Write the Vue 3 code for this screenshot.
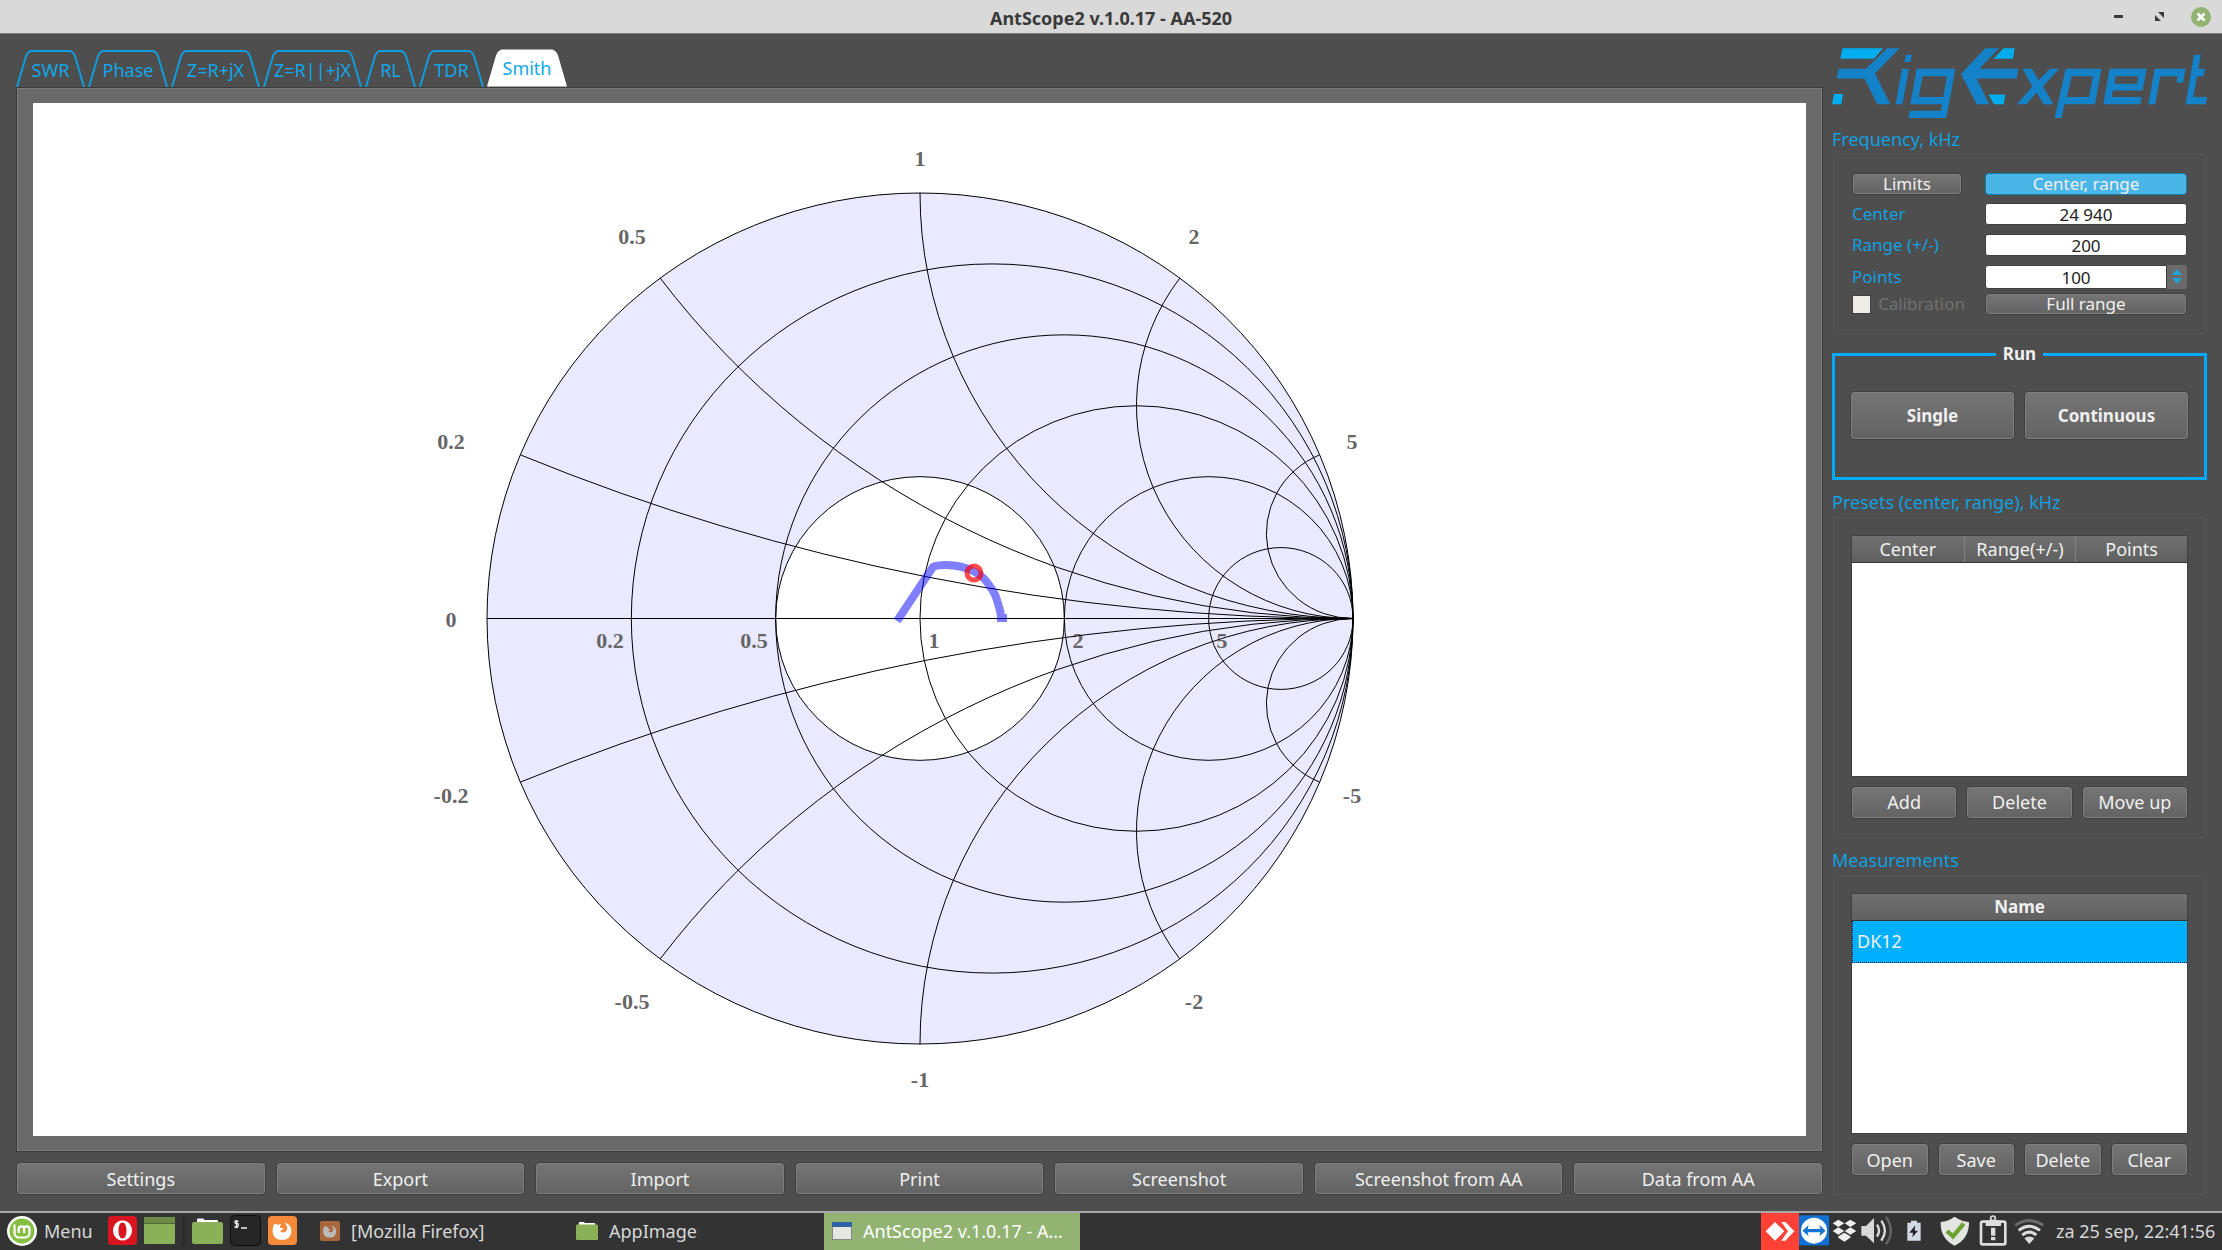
<script setup>
import { ref } from 'vue'

const tabs = [
  { name: 'SWR', w: 69 },
  { name: 'Phase', w: 80 },
  { name: 'Z=R+jX', w: 89 },
  { name: 'Z=R||+jX', w: 99 },
  { name: 'RL', w: 51 },
  { name: 'TDR', w: 65 },
  { name: 'Smith', w: 80 },
]
const active = ref('Smith')
const tabPath = (w) =>
  `M1 38 L10 7 Q12 2 16 2 H${w - 16} Q${w - 12} 2 ${w - 10} 7 L${w - 1} 38`

const actions = ['Settings', 'Export', 'Import', 'Print', 'Screenshot', 'Screenshot from AA', 'Data from AA']

/* Smith chart geometry */
const cx = 920
const cy = 618.5
const rx = 433
const ry = 425.5
const resistance = [0.2, 0.5, 1, 2, 5].map((r) => ({
  r,
  cx: cx + (rx * r) / (1 + r),
  rx: rx / (1 + r),
  ry: ry / (1 + r),
}))
const reactance = [0.2, 0.5, 1, 2, 5].flatMap((x) =>
  [1, -1].map((s) => {
    const d = x * x + 1
    const ex = cx + (rx * (x * x - 1)) / d
    const ey = cy - (s * ry * 2 * x) / d
    return `M${ex} ${ey} A${rx / x} ${ry / x} 0 0 ${s > 0 ? 0 : 1} ${cx + rx} ${cy}`
  })
)
const labels = [
  ['1', 920, 166], ['0.5', 632, 244], ['2', 1194, 244], ['0.2', 451, 449], ['5', 1352, 449],
  ['0', 451, 627], ['-0.2', 451, 803], ['-5', 1352, 803], ['-0.5', 632, 1009], ['-2', 1194, 1009],
  ['-1', 920, 1087],
  ['0.2', 610, 648], ['0.5', 754, 648], ['1', 934, 648], ['2', 1078, 648], ['5', 1222, 648],
]

const center = ref('24 940')
const range = ref('200')
const points = ref('100')
</script>

<template>
  <div class="screen">
    <header class="titlebar">
      <h1>AntScope2 v.1.0.17 - AA-520</h1>
      <div class="winctl">
        <button aria-label="Minimize"><svg width="22" height="22" viewBox="0 0 22 22"><rect x="6" y="9" width="9" height="3" fill="#3a3a3a" /></svg></button>
        <button aria-label="Restore"><svg width="22" height="22" viewBox="0 0 22 22"><path d="M9 6h6v6z M6 9v6h6z" fill="#3a3a3a" /></svg></button>
        <button aria-label="Close"><svg width="22" height="22" viewBox="0 0 22 22"><circle cx="11" cy="11" r="10" fill="#92b372" /><path d="M7.500 7.500l7 7M14.500 7.500l-7 7" stroke="#fff" stroke-width="2.600" /></svg></button>
      </div>
    </header>

    <main class="window">
      <section class="left">
        <nav class="tabs" role="tablist">
          <button
            v-for="t in tabs"
            :key="t.name"
            role="tab"
            class="tab"
            :class="{ on: t.name === active }"
            :aria-selected="t.name === active"
            :style="{ width: t.w + 'px' }"
            @click="active = t.name"
          >
            <svg class="tabshape" :viewBox="`0 0 ${t.w} 38`" aria-hidden="true"><path :d="tabPath(t.w)" /></svg>
            <span>{{ t.name }}</span>
          </button>
        </nav>
        <div class="pane">
          <svg class="chart" viewBox="33 103 1773 1033" role="img" aria-label="Smith chart">
            <ellipse :cx="cx" :cy="cy" :rx="rx" :ry="ry" class="disc" />
            <ellipse :cx="cx" :cy="cy" :rx="rx / 3" :ry="ry / 3" class="swr" />
            <text v-for="(l, i) in labels" :key="i" :x="l[1]" :y="l[2]">{{ l[0] }}</text>
            <g class="grid">
              <ellipse v-for="c in resistance" :key="c.r" :cx="c.cx" :cy="cy" :rx="c.rx" :ry="c.ry" />
              <path v-for="d in reactance" :key="d" :d="d" />
              <path :d="`M${cx - rx} ${cy}H${cx + rx}`" />
            </g>
            <path class="trace" d="M897 621L933 567Q936 565 946 565Q962 565 975 572Q984 577 989 585Q996 594 998 604Q1001 612 1001 618L1007 618" />
            <circle class="marker" cx="974" cy="573" r="7" />
          </svg>
        </div>
        <div class="actions">
          <button v-for="a in actions" :key="a" class="btn">{{ a }}</button>
        </div>
      </section>

      <aside class="side">
        <svg class="logo" viewBox="96 145 1125 209" role="img" aria-label="RigExpert" preserveAspectRatio="none">
          <g fill="#00aeef">
            <path d="M127 146H249L222 177H121z M102 282H129L124 313H96z M611 146H644L639 177H580z M565 284H616L611 313H582z" />
          </g>
          <g fill="#1482c8">
            <path d="M262 146H299L225 221L271 313H232L193 236H110L116 207H198z" />
            <path d="M318 165H336L331 187H313z M306 207H327L307 313H287z" />
            <path fill-rule="evenodd" d="M350 207H466L439 354H325L330 332H422L426 313H331z M368 229L356 291H430L441 229z" />
            <path d="M556 146H597L538 207H655L650 236H530L568 313H530L483 223z" />
            <path d="M668 207H696L716 241L750 207H778L729 259L760 313H731L710 278L679 313H651L697 260z" />
            <path fill-rule="evenodd" d="M797 207H904L885 313H793L785 354H764z M815 229L801 291H867L879 229z" />
            <path fill-rule="evenodd" d="M929 207H1040L1028 272H939L935 291H1025L1021 313H910z M947 229L943 252H1011L1015 229z" />
            <path d="M1064 207H1157L1149 248H1129L1133 229H1081L1066 313H1045z" />
            <path d="M1182 165H1202L1195 207H1215L1211 229H1191L1180 291H1221L1218 313H1157z" />
          </g>
        </svg>

        <section class="group">
          <h2>Frequency, kHz</h2>
          <div class="frame freq">
            <button class="btn slim">Limits</button>
            <button class="btn slim chosen">Center, range</button>
            <label for="center">Center</label>
            <input id="center" v-model="center" type="text" />
            <label for="range">Range (+/-)</label>
            <input id="range" v-model="range" type="text" />
            <label for="points">Points</label>
            <div class="spin">
              <input id="points" v-model="points" type="text" />
              <div class="steps">
                <button aria-label="Increase"><svg width="12" height="7" viewBox="0 0 12 7"><path d="M1 7L6 1L11 7z" fill="#1fa5d5" /></svg></button>
                <button aria-label="Decrease"><svg width="12" height="7" viewBox="0 0 12 7"><path d="M1 0L6 6L11 0z" fill="#1fa5d5" /></svg></button>
              </div>
            </div>
            <label class="calib"><input type="checkbox" disabled />Calibration</label>
            <button class="btn slim">Full range</button>
          </div>
        </section>

        <fieldset class="run">
          <legend>Run</legend>
          <div class="row">
            <button class="btn big">Single</button>
            <button class="btn big">Continuous</button>
          </div>
        </fieldset>

        <section class="group grow">
          <h2>Presets (center, range), kHz</h2>
          <div class="frame list">
            <div class="tablebox">
              <table>
                <thead><tr><th>Center</th><th>Range(+/-)</th><th>Points</th></tr></thead>
              </table>
            </div>
            <div class="row">
              <button class="btn">Add</button>
              <button class="btn">Delete</button>
              <button class="btn">Move up</button>
            </div>
          </div>
        </section>

        <section class="group grow">
          <h2>Measurements</h2>
          <div class="frame list">
            <div class="tablebox">
              <table class="names">
                <thead><tr><th>Name</th></tr></thead>
                <tbody><tr><td>DK12</td></tr></tbody>
              </table>
            </div>
            <div class="row">
              <button class="btn">Open</button>
              <button class="btn">Save</button>
              <button class="btn">Delete</button>
              <button class="btn">Clear</button>
            </div>
          </div>
        </section>
      </aside>
    </main>

    <footer class="taskbar">
      <button class="menu">
        <svg width="30" height="32" viewBox="0 0 30 32">
          <circle cx="15" cy="16" r="15" fill="#fff" /><circle cx="15" cy="16" r="12.500" fill="#86be43" />
          <path d="M7.500 9.500V18a4.500 4.500 0 0 0 4.500 4.500H18a4.500 4.500 0 0 0 4.500-4.500V14a2.700 2.700 0 0 0-5.400 0V18M17.100 14a2.700 2.700 0 0 0-5.400 0V18" fill="none" stroke="#fff" stroke-width="2.200" />
        </svg>
        <span>Menu</span>
      </button>
      <div class="launch">
        <button aria-label="Opera"><svg width="29" height="29" viewBox="0 0 29 29"><rect width="29" height="29" rx="4" fill="#d9151f" /><path fill-rule="evenodd" fill="#fff" d="M14.500 4.500a9.500 10 0 1 0 .01 0z M14.500 6.500c2.500 0 4 3.500 4 8s-1.500 8-4 8s-4-3.500-4-8s1.500-8 4-8z" /></svg></button>
        <button aria-label="Show desktop"><svg width="31" height="29" viewBox="0 0 31 29"><rect y="1" width="31" height="27" rx="1" fill="#8bb158" /><path d="M0 1H31V7H0z" fill="#6c8c47" /><path d="M0 7.500H31" stroke="#4f6a31" /></svg></button>
        <i class="sep"></i>
        <button aria-label="Files"><svg width="31" height="29" viewBox="0 0 31 29"><path d="M5 6V3.500q0-1 1-1H11q1 0 1 1l1 .5H25q1 0 1 1V7z" fill="#fff" /><rect y="6" width="31" height="22" rx="2" fill="#8bb158" /></svg></button>
        <button aria-label="Terminal"><svg width="31" height="31" viewBox="0 0 31 31"><rect x=".5" y=".5" width="30" height="30" rx="4" fill="#262626" stroke="#0d0d0d" /><path d="M8.500 6.500q-3.500-1.500-3.500.5t2 1.500t1 2.500t-3.500.5M6.500 5v8M11 13h6" fill="none" stroke="#eee" stroke-width="1.300" /></svg></button>
        <button aria-label="Firefox"><svg width="29" height="31" viewBox="0 0 29 31"><rect y="1" width="29" height="29" rx="4" fill="#f58a3a" /><path fill="#fff" d="M6 9q2-1 3.500 1q2-1 3.500-1q-1.500 2-1 3.500l3.500 1q-1 2-3 2q0 2 3 2q4.500-1 3.500-6q-1-2-2.500-4q7 2 7 9q-1 8.500-9.500 8.500t-9.500-8.500q0-4 1.500-7.500z" /></svg></button>
      </div>
      <div class="tasks">
        <button>
          <svg width="20" height="22" viewBox="0 0 29 31"><rect y="1" width="29" height="29" rx="3" fill="#a9683c" /><path fill="#bbb" d="M6 9q2-1 3.500 1q2-1 3.500-1q-1.500 2-1 3.500l3.500 1q-1 2-3 2q0 2 3 2q4.500-1 3.500-6q-1-2-2.500-4q7 2 7 9q-1 8.500-9.500 8.500t-9.500-8.500q0-4 1.500-7.500z" /></svg>
          <span>[Mozilla Firefox]</span>
        </button>
        <button>
          <svg width="22" height="21" viewBox="0 0 31 29"><path d="M4 7V3.500q0-1 1-1H11q1 0 1 1l1 .5H26q1 0 1 1V8z" fill="#fff" /><rect y="6" width="31" height="22" rx="2" fill="#8bb158" /></svg>
          <span>AppImage</span>
        </button>
        <button class="current">
          <svg width="20" height="18" viewBox="0 0 20 18"><rect x=".5" y=".5" width="19" height="17" fill="#e4e6e2" stroke="#888" /><path d="M0 0H20V5H0z" fill="#2f62a5" /></svg>
          <span>AntScope2 v.1.0.17 - A...</span>
        </button>
      </div>
      <div class="tray">
        <svg width="38" height="37" viewBox="123 39 114 111"><rect x="123" y="39" width="114" height="111" fill="#ff4136" /><path fill="#fff" d="M137 94L165 66L193 94L165 122z M184 66h12L223 94L196 122H184L204 94z" /></svg>
        <svg width="31" height="37" viewBox="237 39 93 111"><rect x="237" y="46" width="90" height="90" fill="#0f71d3" /><circle cx="282" cy="92" r="39" fill="#fff" /><path fill="#1573d2" d="M247 92L266 75L263 87H301L298 75L317 92L298 109L301 97H263L266 109z" /></svg>
        <svg width="28" height="37" viewBox="330 39 84 111"><path fill="#eee" d="M338 70L355 59L373 70L355 81z M374 70L391 59L409 70L391 81z M338 93L355 82L373 93L355 104z M374 93L391 82L409 93L391 104z M355 109L373 98L391 109V113L373 125L355 113z" /></svg>
        <svg width="38" height="37" viewBox="414 39 114 111"><path fill="#d8d8d8" d="M424 78H438L462 54V130L438 107H424z" /><g fill="none" stroke-width="7"><path d="M471 74q12 18 0 36" stroke="#ddd" /><path d="M484 62q21 30 0 60" stroke="#ddd" /><path d="M498 51q29 41 0 82" stroke="#666" /></g></svg>
        <svg width="36" height="37" viewBox="528 39 108 111"><path fill="#d3dae6" d="M562 68H573V62H591V68H602V122H562z" /><path fill="#222" d="M586 76L568 98H579L577 112L594 92H584z" /></svg>
        <svg width="42" height="37" viewBox="636 39 126 111"><path fill="#e3e6e0" d="M704 50Q724 64 747 66Q748 116 704 137Q660 116 662 66Q684 64 704 50z" /><path d="M681 93L699 109L731 71" fill="none" stroke="#6da133" stroke-width="13" /></svg>
        <svg width="36" height="37" viewBox="762 39 108 111"><rect x="783" y="65" width="73" height="68" rx="5" fill="none" stroke="#ddd" stroke-width="8" /><path fill="#ddd" d="M797 61H843V78H797z M813 83H826V107H813z M813 111H826V121H813z" /><circle cx="819" cy="55" r="7" fill="#333" stroke="#ddd" stroke-width="5" /></svg>
        <svg width="37" height="37" viewBox="870 39 111 111"><g fill="none" stroke-width="9"><path d="M886 76Q928 47 970 76" stroke="#6a6a6a" /><path d="M896 91Q928 67 960 91M907 105Q928 88 949 105" stroke="#ddd" /></g><path fill="#ddd" d="M913 115Q928 104 943 115L928 132z" /></svg>
        <time>za 25 sep, 22:41:56</time>
      </div>
    </footer>
  </div>
</template>

<style>
body {
  margin: 0;
  background: #4e4e4e;
}
</style>

<style scoped>
.screen {
  display: flex;
  flex-direction: column;
  min-height: 100vh;
  box-sizing: border-box;
  font-family: "Noto Sans", "Open Sans", sans-serif;
  font-size: 18px;
  line-height: 24px;
  color: #f0f0f0;
  background: #4e4e4e;
}
.screen *,
.screen *::before {
  box-sizing: border-box;
}
button,
input {
  font: inherit;
  color: inherit;
  margin: 0;
  padding: 0;
  border: 0;
  background: none;
}
svg {
  display: block;
  flex: none;
}
.titlebar {
  display: grid;
  grid-template-columns: 1fr auto 1fr;
  align-items: center;
  height: 34px;
  background: #d9d9d9;
  border-bottom: 1px solid #7c7c7c;
  color: #3a3a3a;
}
h1 {
  grid-column: 2;
  margin: 0;
  padding-top: 2px;
  font-size: 18px;
  font-weight: 700;
}
.winctl {
  display: flex;
  justify-content: flex-end;
  gap: 19px;
  padding-right: 10px;
}
.window {
  flex: 1;
  display: flex;
  gap: 9px;
  padding: 14px 15px 16px 16px;
}
.left {
  flex: 1;
  min-width: 0;
  display: flex;
  flex-direction: column;
}
.tabs {
  display: flex;
  gap: 3px;
  height: 39px;
}
.tab {
  position: relative;
  flex: none;
  height: 39px;
  padding-top: 4px;
  color: #10a7ea;
  white-space: nowrap;
}
.tab span {
  position: relative;
}
.tabshape {
  position: absolute;
  left: 0;
  top: 1px;
  width: 100%;
  height: 38px;
  fill: none;
  stroke: #0f9ddd;
  stroke-width: 2;
}
.tab.on {
  padding-top: 0;
}
.tab.on .tabshape {
  top: 0;
  height: 39px;
  fill: #fff;
  stroke: #fff;
}
.pane {
  flex: 1;
  display: flex;
  padding: 15px 16px;
  background: #6a6a6a;
  border: 1px solid #3c3c3c;
  box-shadow: inset 0 0 0 1px #7c7c7c;
}
.chart {
  flex: 1;
  width: 100%;
  background: #fff;
}
.disc,
.swr,
.grid {
  stroke: #000;
  stroke-width: 1;
}
.disc {
  fill: #e9e9ff;
}
.swr {
  fill: #fff;
}
.grid {
  fill: none;
}
.chart text {
  font: bold 22px "Liberation Serif", serif;
  fill: #666;
  text-anchor: middle;
}
.trace {
  fill: none;
  stroke: #0000ff;
  stroke-opacity: 0.5;
  stroke-width: 8;
}
.marker {
  fill: none;
  stroke: #ff0000;
  stroke-opacity: 0.7;
  stroke-width: 5;
}
.actions {
  display: flex;
  gap: 10px;
  margin-top: 10px;
}
.btn {
  flex: 1 1 0;
  min-width: 0;
  height: 33px;
  line-height: 24px;
  border: 1px solid #404040;
  border-radius: 4px;
  background: linear-gradient(#757575, #636363);
  box-shadow: inset 0 0 0 1px #7e7e7e;
  color: #f0f0f0;
}
.side {
  flex: none;
  width: 375px;
  display: flex;
  flex-direction: column;
}
.logo {
  width: 100%;
  height: 70px;
  margin-bottom: 9px;
}
.group {
  display: flex;
  flex-direction: column;
}
.grow {
  flex: 1;
  margin-top: 10px;
}
h2 {
  margin: 0 0 3px;
  font-size: 18px;
  font-weight: 400;
  line-height: 24px;
  color: #10a0e0;
}
.frame {
  margin: 0 1px;
  border: 1px solid #555;
  border-radius: 2px;
}
.freq {
  display: grid;
  grid-template-columns: 110px 202px;
  column-gap: 23px;
  grid-template-rows: 31px 30px 32px 31px 24px;
  align-items: center;
  padding: 13px 18px 17px;
  font-size: 17px;
  color: #10a0e0;
}
.slim {
  height: 22px;
  line-height: 20px;
}
.chosen {
  background: #4ab6e8;
  border-color: #1180b0;
  box-shadow: none;
}
.freq input[type="text"] {
  width: 100%;
  height: 22px;
  padding-top: 2px;
  border: 1px solid #404040;
  border-radius: 3px;
  background: #fff;
  color: #222;
  text-align: center;
}
.spin {
  display: flex;
}
.freq .spin input[type="text"] {
  height: 24px;
  border-radius: 3px 0 0 3px;
}
.steps {
  flex: none;
  display: flex;
  flex-direction: column;
  align-items: center;
  justify-content: center;
  gap: 3px;
  width: 20px;
  background: #6a6a6a;
  border-radius: 0 3px 3px 0;
}
.calib {
  display: flex;
  align-items: center;
  gap: 7px;
  color: #707070;
}
.calib input {
  appearance: none;
  flex: none;
  width: 19px;
  height: 19px;
  background: #efebe7;
  border: 1px solid #404040;
}
.run {
  margin: 8px 0 0;
  padding: 25px 15px 37px;
  border: 3px solid #00aaff;
  min-width: 0;
  font-size: 17px;
}
legend {
  margin: 0 auto;
  padding: 0 7px;
  font-weight: 700;
}
.row {
  display: flex;
  gap: 9px;
}
.big {
  height: 49px;
  font-weight: 700;
}
.list {
  flex: 1;
  display: flex;
  flex-direction: column;
  gap: 9px;
  padding: 17px 17px 18px;
}
.tablebox {
  flex: 1;
  border: 1px solid #404040;
  background: #fff;
}
table {
  width: 100%;
  border-collapse: separate;
  border-spacing: 0;
  table-layout: fixed;
}
th {
  height: 27px;
  padding: 0;
  font-weight: 400;
  color: #f0f0f0;
  background: linear-gradient(#707070, #606060);
  border-bottom: 1px solid #333;
}
th + th {
  border-left: 1px solid #808080;
}
.names th {
  font-size: 17px;
  font-weight: 700;
}
td {
  height: 42px;
  padding: 0 4px;
  background: #00b0ff;
  color: #f0f0f0;
  border: 1px dotted #225;
  border-width: 0 0 1px 1px;
}
.taskbar {
  display: flex;
  align-items: center;
  height: 39px;
  border-top: 2px solid #a8a8a8;
  background: #333;
  color: #d8d8d8;
}
.menu {
  display: flex;
  align-items: center;
  gap: 7px;
  width: 100px;
  padding-left: 7px;
}
.launch {
  display: flex;
  align-items: center;
  gap: 7px;
  width: 212px;
  padding-left: 8px;
}
.menu,
.launch,
.tasks svg,
.tasks span,
.tray time {
  margin-bottom: 2px;
}
.sep {
  width: 3px;
  height: 30px;
  background: #2b2b2b;
}
.tasks {
  flex: 1;
  display: flex;
  align-self: stretch;
}
.tasks button {
  display: flex;
  align-items: center;
  gap: 11px;
  width: 256px;
  padding-left: 8px;
  white-space: nowrap;
}
.tasks .current {
  background: #92b372;
  color: #fff;
}
.tray {
  display: flex;
  align-items: center;
}
.tray time {
  width: 175px;
  padding-left: 9px;
  white-space: nowrap;
}
</style>
